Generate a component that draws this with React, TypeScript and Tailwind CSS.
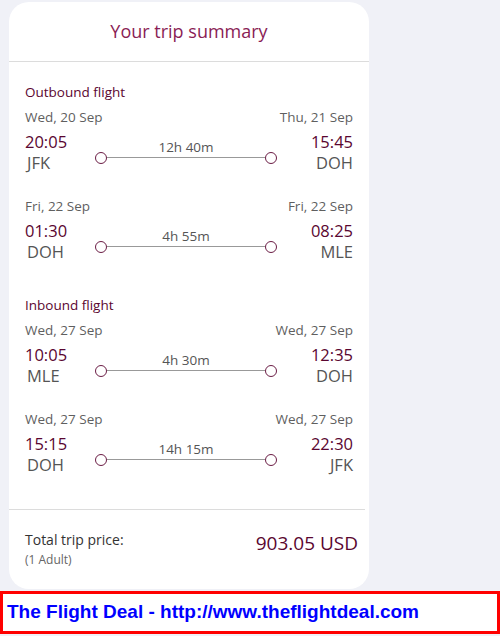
import type { ReactNode } from "react";

type Leg = {
  depDate: string;
  arrDate: string;
  depTime: string;
  arrTime: string;
  from: string;
  to: string;
  duration: string;
};

const OUTBOUND: Leg[] = [
  { depDate: "Wed, 20 Sep", arrDate: "Thu, 21 Sep", depTime: "20:05", arrTime: "15:45", from: "JFK", to: "DOH", duration: "12h 40m" },
  { depDate: "Fri, 22 Sep", arrDate: "Fri, 22 Sep", depTime: "01:30", arrTime: "08:25", from: "DOH", to: "MLE", duration: "4h 55m" },
];

const INBOUND: Leg[] = [
  { depDate: "Wed, 27 Sep", arrDate: "Wed, 27 Sep", depTime: "10:05", arrTime: "12:35", from: "MLE", to: "DOH", duration: "4h 30m" },
  { depDate: "Wed, 27 Sep", arrDate: "Wed, 27 Sep", depTime: "15:15", arrTime: "22:30", from: "DOH", to: "JFK", duration: "14h 15m" },
];

export default function App() {
  return (
    <div className="min-h-[636px] w-[500px] bg-[#f0f1f7] font-['Open_Sans',sans-serif]">
      <div className="pl-[9px] pt-[2px]">
        <div className="w-[360px] rounded-[20px] bg-white">
          <header className="flex h-[60px] items-center justify-center border-b border-[#dcdcdc]">
            <h2 className="text-[18px] text-[#8a1d55]">Your trip summary</h2>
          </header>

          <div className="px-[16px] pt-[20px] pb-[33px]">
            <Section title="Outbound flight">
              {OUTBOUND.map((leg, i) => (
                <LegRow key={i} leg={leg} first={i === 0} />
              ))}
            </Section>
            <div className="h-[32px]" />
            <Section title="Inbound flight">
              {INBOUND.map((leg, i) => (
                <LegRow key={i} leg={leg} first={i === 0} />
              ))}
            </Section>
          </div>

          <div className="mr-[4px] border-t border-[#dcdcdc]" />

          <div className="flex items-start justify-between pt-[19px] pb-[20px] pl-[16px] pr-[11px]">
            <div>
              <p className="text-[14px] leading-[22px] text-[#333]">Total trip price:</p>
              <p className="text-[12px] leading-[18px] text-[#666]">(1 Adult)</p>
            </div>
            <p className="pt-[1px] text-[19px] leading-[26px] text-[#5a0630]">903.05 USD</p>
          </div>
        </div>
      </div>

      <div className="mt-[2px] flex h-[43px] items-center border-[3px] border-[#ff0000] bg-white pl-[4px]">
        <span className="font-['Liberation_Sans',Arial,sans-serif] text-[19px] font-bold text-[#0000ff]">
          The Flight Deal - http://www.theflightdeal.com
        </span>
      </div>
    </div>
  );
}

function Section({ title, children }: { title: string; children: ReactNode }) {
  return (
    <div>
      <p className="text-[13.5px] leading-[20px] text-[#5a0630]">{title}</p>
      {children}
    </div>
  );
}

function LegRow({ leg, first }: { leg: Leg; first: boolean }) {
  return (
    <div className={first ? "mt-[5px]" : "mt-[22px]"}>
      <div className="flex justify-between text-[13.5px] leading-[20px] text-[#5f5f5f]">
        <span>{leg.depDate}</span>
        <span>{leg.arrDate}</span>
      </div>
      <div className="mt-[5px] flex items-center">
        <div className="flex flex-col items-start">
          <span className="text-[16.5px] leading-[20px] text-[#5a0630]">{leg.depTime}</span>
          <span className="pl-[2px] text-[16.5px] leading-[22px] text-[#555]">{leg.from}</span>
        </div>
        <div className="ml-[28px] mr-[34px] flex flex-1 flex-col pb-[4px]">
          <span className="text-center text-[13.5px] leading-[16px] text-[#555]">{leg.duration}</span>
          <div className="-mt-[3px] flex items-center">
            <span className="h-[12px] w-[12px] shrink-0 rounded-full border-[1.5px] border-[#6b1d45]" />
            <span className="h-px flex-1 bg-[#999]" />
            <span className="h-[12px] w-[12px] shrink-0 rounded-full border-[1.5px] border-[#6b1d45]" />
          </div>
        </div>
        <div className="flex flex-col items-end">
          <span className="text-[16.5px] leading-[20px] text-[#5a0630]">{leg.arrTime}</span>
          <span className="text-[16.5px] leading-[22px] text-[#555]">{leg.to}</span>
        </div>
      </div>
    </div>
  );
}
